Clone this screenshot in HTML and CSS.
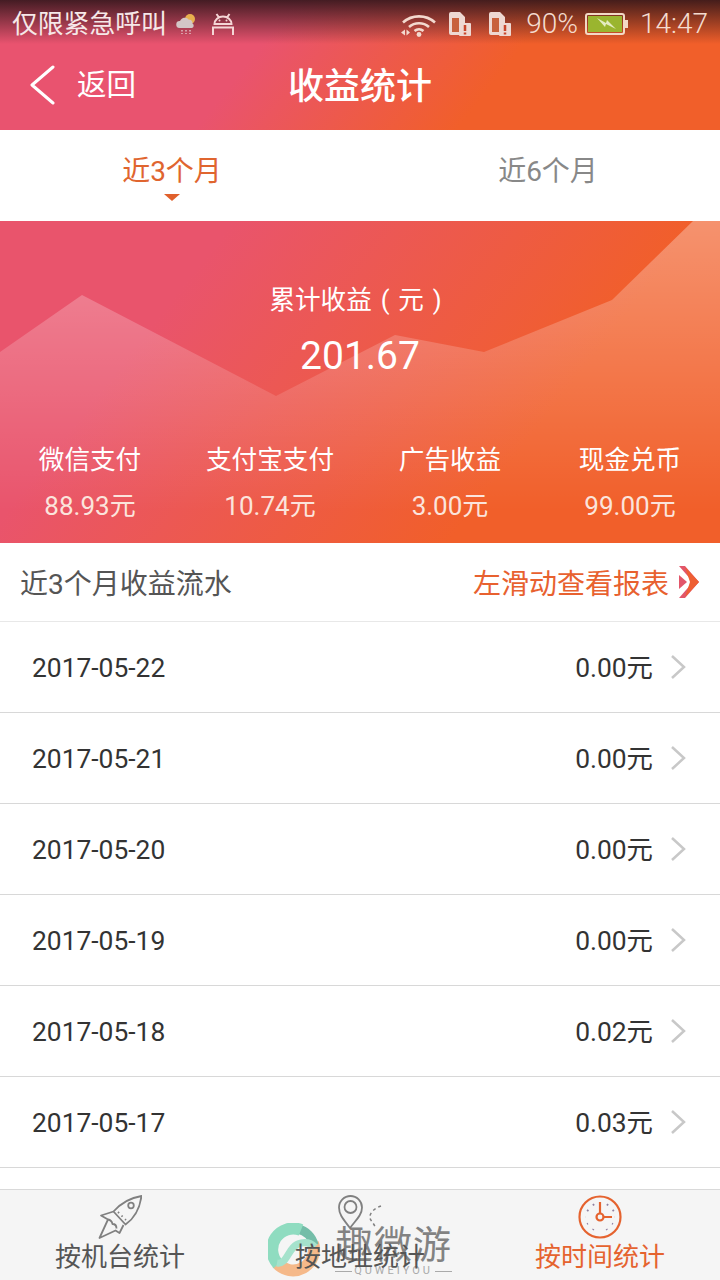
FILE: index.html
```html
<!DOCTYPE html>
<html lang="zh-CN">
<head>
    <meta charset="UTF-8">
    <meta name="viewport" content="width=device-width, initial-scale=1.0">
    <title>收益统计</title>
    <link rel="stylesheet" href="styles.css">
</head>
<body>
    <div class="page">
        <header class="app-head">
            <div class="status-bar">
                <div class="status-left">
                    <span class="carrier">仅限紧急呼叫</span>
                    <svg class="weather" width="20" height="24" viewBox="0 0 20 24">
                        <circle cx="14" cy="7" r="5" fill="#e8b04e"/>
                        <path d="M3.500 16a3.500 3.500 0 0 1 .5-7A5 5 0 0 1 12.500 7.500a4 4 0 0 1 4 4A2.500 2.500 0 0 1 16 16z" fill="#d3c6c6"/>
                        <path d="M6 18v4M10 18v4M14 18v4" stroke="#ecdcdc" stroke-width="1.200" stroke-dasharray="1.500 1.500"/>
                    </svg>
                    <svg class="android" width="24" height="23" viewBox="0 0 24 23" fill="none" stroke="#f5d6d6" stroke-width="2">
                        <path d="M3.500 11a8.500 7.500 0 0 1 17 0z"/>
                        <path d="M5.500 1l2.500 3.500M18.500 1L16 4.500"/>
                        <circle cx="8.500" cy="7.500" r="1" fill="#f5d6d6" stroke="none"/>
                        <circle cx="15.500" cy="7.500" r="1" fill="#f5d6d6" stroke="none"/>
                        <path d="M2 22v-7.500h20V22"/>
                    </svg>
                </div>
                <div class="status-right">
                    <svg class="wifi" width="36" height="26" viewBox="0 0 36 26" fill="none" stroke="#f3d9cf" stroke-width="2.600">
                        <path d="M3 11.500a24 24 0 0 1 32 0"/>
                        <path d="M9 16a15 15 0 0 1 20 0"/>
                        <path d="M14.500 20a7 7 0 0 1 9 0"/>
                        <circle cx="19" cy="23.500" r="2.400" fill="#f3d9cf" stroke="none"/>
                        <path d="M1 21.500l4-3v6zM6.500 18.500l3.500 3-3.500 3z" fill="#f3d9cf" stroke="none"/>
                    </svg>
                    <svg class="sim" width="23" height="26" viewBox="0 0 23 26">
                        <path d="M1 3a2 2 0 0 1 2-2h9l5 5v7h-6v11H3a2 2 0 0 1-2-2z" fill="#eed8d2"/>
                        <rect x="4" y="7" width="7" height="14" fill="#c8613c"/>
                        <rect x="11" y="12" width="12" height="13" rx="1" fill="#eed8d2"/>
                        <path d="M17 14v6M17 21.500v2" stroke="#c8452a" stroke-width="2.500"/>
                    </svg>
                    <svg class="sim" width="23" height="26" viewBox="0 0 23 26">
                        <path d="M1 3a2 2 0 0 1 2-2h9l5 5v7h-6v11H3a2 2 0 0 1-2-2z" fill="#eed8d2"/>
                        <rect x="4" y="7" width="7" height="14" fill="#c8613c"/>
                        <rect x="11" y="12" width="12" height="13" rx="1" fill="#eed8d2"/>
                        <path d="M17 14v6M17 21.500v2" stroke="#c8452a" stroke-width="2.500"/>
                    </svg>
                    <span class="status-text pct">90%</span>
                    <svg class="battery" width="44" height="22" viewBox="0 0 44 22">
                        <rect x="1" y="1" width="38" height="20" rx="2" fill="none" stroke="#f3d9c6" stroke-width="2"/>
                        <rect x="3" y="3" width="34" height="16" fill="#9ab52f"/>
                        <rect x="40" y="7" width="3" height="8" fill="#f3d9c6"/>
                        <path d="M12 5l9 5 1-3 9 9-10-5-1 3z" fill="#e4ecc0"/>
                    </svg>
                    <span class="status-text">14:47</span>
                </div>
            </div>
            <div class="nav-bar">
                <a class="back">
                    <svg width="26" height="40" viewBox="0 0 26 40" fill="none" stroke="#fff" stroke-width="3" stroke-linecap="round" stroke-linejoin="round">
                        <path d="M24 2L3 20l21 18"/>
                    </svg>
                    <span>返回</span>
                </a>
                <h1 class="title">收益统计</h1>
            </div>
        </header>

        <div class="tabs">
            <div class="tab tab-left active">近3个月</div>
            <div class="tab tab-right">近6个月</div>
        </div>

        <section class="hero">
            <svg class="hero-chart" width="720" height="322" viewBox="0 0 720 322">
                <defs>
                    <linearGradient id="chartFade" x1="0" y1="0" x2="0" y2="1">
                        <stop offset="0" stop-color="#fff" stop-opacity="0.32"/>
                        <stop offset="0.9" stop-color="#fff" stop-opacity="0"/>
                    </linearGradient>
                </defs>
                <polygon points="0,131 82,74 276,175 395,114 484,131 612,79 693,0 720,0 720,322 0,322" fill="url(#chartFade)"/>
            </svg>
            <div class="hero-total">
                <p class="hero-label">累计收益 ( 元 )</p>
                <p class="hero-value">201.67</p>
            </div>
            <div class="hero-stats">
                <div class="stat"><p>微信支付</p><p class="stat-value">88.93元</p></div>
                <div class="stat"><p>支付宝支付</p><p class="stat-value">10.74元</p></div>
                <div class="stat"><p>广告收益</p><p class="stat-value">3.00元</p></div>
                <div class="stat"><p>现金兑币</p><p class="stat-value">99.00元</p></div>
            </div>
        </section>

        <div class="list-head">
            <span class="list-title">近3个月收益流水</span>
            <span class="list-hint">
                <span class="hint-text">左滑动查看报表</span>
                <svg width="22" height="32" viewBox="0 0 22 32">
                    <polygon points="1,0 7,0 21,16 15,16" fill="#e2566a"/>
                    <polygon points="21,16 7,32 1,32 15,16" fill="#e2566a"/>
                    <polygon points="7,1 21,16 7,31 12,16" fill="#ee5f33"/>
                    <polygon points="1,9 9,16 1,23" fill="#e2566a"/>
                </svg>
            </span>
        </div>

        <ul class="rows">
            <li class="row"><span class="date">2017-05-22</span><span class="amount">0.00元</span><svg class="chev" width="16" height="24" viewBox="0 0 16 24"><path d="M2 1l12 11L2 23"/></svg></li>
            <li class="row"><span class="date">2017-05-21</span><span class="amount">0.00元</span><svg class="chev" width="16" height="24" viewBox="0 0 16 24"><path d="M2 1l12 11L2 23"/></svg></li>
            <li class="row"><span class="date">2017-05-20</span><span class="amount">0.00元</span><svg class="chev" width="16" height="24" viewBox="0 0 16 24"><path d="M2 1l12 11L2 23"/></svg></li>
            <li class="row"><span class="date">2017-05-19</span><span class="amount">0.00元</span><svg class="chev" width="16" height="24" viewBox="0 0 16 24"><path d="M2 1l12 11L2 23"/></svg></li>
            <li class="row"><span class="date">2017-05-18</span><span class="amount">0.02元</span><svg class="chev" width="16" height="24" viewBox="0 0 16 24"><path d="M2 1l12 11L2 23"/></svg></li>
            <li class="row"><span class="date">2017-05-17</span><span class="amount">0.03元</span><svg class="chev" width="16" height="24" viewBox="0 0 16 24"><path d="M2 1l12 11L2 23"/></svg></li>
        </ul>

        <nav class="bottom-nav">
            <div class="nav-item">
                <svg width="44" height="44" viewBox="0 0 44 44" fill="none" stroke="#808080" stroke-width="1.800" stroke-linejoin="round">
                    <path d="M43.500 1C34 2.500 24 7 15.500 16.500L27.500 29.500C37 23 42 12 43.500 1z"/>
                    <circle cx="33" cy="10.500" r="2.800"/>
                    <path d="M15.500 16.500L3 20.500l7 4-8.500 18.500 16-7.500 4 2.500 4-8M10 24.500c3 .5 4 2 4.500 4.500 2.500 0 4 1.500 4 4.500"/>
                    <path d="M20 17l8 8" stroke-dasharray="1.500 3.500"/>
                </svg>
                <span>按机台统计</span>
            </div>
            <div class="nav-item">
                <svg width="44" height="44" viewBox="0 0 44 44" fill="none" stroke="#808080" stroke-width="1.800">
                    <path d="M12 33C6 25 1 20 1 12.500a11.500 11.500 0 0 1 23 0C24 20 18 25 12 33z"/>
                    <circle cx="12.500" cy="12" r="6"/>
                    <path d="M43 11c-6 2-12 7-11 12 .5 3 4 5 6 11" stroke-dasharray="3 3" stroke-width="1.500"/>
                </svg>
                <span>按地址统计</span>
            </div>
            <div class="nav-item active">
                <svg width="44" height="44" viewBox="0 0 44 44" fill="none" stroke="#e5632f" stroke-width="2.200">
                    <circle cx="22" cy="22" r="20.500"/>
                    <path d="M22 7v11.500M25.500 22H34"/>
                    <circle cx="22" cy="22" r="3.500"/>
                    <path d="M30 9l-1 1.500M36 15l-1.500 1M37 22h-.1M35 29l-1-.5M29 35l-.5-1M22 37v-.1M15 35l.5-1M9 29l1-.5M7 22h.1M9 15l1.500 1M15 9l1 1.500" stroke="#8f7fa0" stroke-width="1.800"/>
                </svg>
                <span>按时间统计</span>
            </div>
            <div class="watermark">
                <svg class="wm-logo" width="52" height="54" viewBox="0 0 52 54" fill="none" stroke-width="12">
                    <path d="M45 20A21 21 0 0 1 9 40" stroke="#f5b98a"/>
                    <path d="M30 6A21 21 0 0 1 46 22" stroke="#74bda8" stroke-width="9"/>
                    <path d="M33 7A21 21 0 0 0 10 41" stroke="#8fdcc0"/>
                    <path d="M9 40C20 42 20 22 33 20C38 19 43 20 47 24" stroke="#a5e2cc" stroke-width="7"/>
                </svg>
                <div class="wm-text">
                    <span class="wm-name">趣微游</span>
                    <span class="wm-sub">QUWEIYOU</span>
                </div>
            </div>
        </nav>
    </div>
</body>
</html>
```

FILE: styles.css
```css
* {
    box-sizing: border-box;
}
body {
    margin: 0;
    padding: 0;
    font-family: Roboto, "Noto Sans CJK SC", sans-serif;
    background-color: #fff;
    color: #333;
}
p, ul, h1 {
    margin: 0;
    padding: 0;
}
.page {
    width: 720px;
    height: 1280px;
    display: flex;
    flex-direction: column;
    overflow: hidden;
}

/* top bar */
.app-head {
    height: 130px;
    background: linear-gradient(128deg, #e9536f 36%, #f15f2a 68%);
    color: #fff;
}
.status-bar {
    height: 44px;
    padding: 4px 12px 0;
    display: flex;
    justify-content: space-between;
    align-items: center;
    background: linear-gradient(to bottom, rgba(45, 20, 25, 0.88), rgba(45, 20, 25, 0));
}
.status-left, .status-right {
    display: flex;
    align-items: center;
}
.carrier {
    font-size: 25.800px;
    line-height: 36px;
    color: #f6e8e8;
}
.weather {
    margin-left: 9px;
}
.android {
    margin-left: 15px;
}
.status-text {
    font-size: 28px;
    font-weight: 300;
    line-height: 36px;
    color: #f4dccf;
}
.sim {
    margin-left: 12px;
}
.sim + .sim {
    margin-left: 17px;
}
.pct {
    margin-left: 15px;
}
.battery {
    margin: 0 11px 0 7px;
}
.nav-bar {
    height: 86px;
    position: relative;
    display: flex;
    align-items: center;
    justify-content: center;
}
.back {
    position: absolute;
    left: 29px;
    top: 21px;
    display: flex;
    align-items: center;
    gap: 22px;
    font-size: 29.500px;
    line-height: 40px;
}
.title {
    font-size: 36px;
    font-weight: 500;
    line-height: 50px;
}

/* tabs */
.tabs {
    height: 91px;
    display: flex;
    background: #fff;
}
.tab {
    flex: 1;
    height: 80px;
    padding-top: 21px;
    text-align: center;
    font-size: 28px;
    line-height: 42px;
    color: #888;
    position: relative;
}
.tab-left {
    padding-right: 18px;
}
.tab-right {
    padding-left: 14px;
}
.tab.active {
    color: #e0652f;
}
.tab.active::after {
    content: "";
    position: absolute;
    left: 164px;
    top: 64px;
    border-left: 8px solid transparent;
    border-right: 8px solid transparent;
    border-top: 7px solid #e0602c;
}

/* summary block */
.hero {
    height: 322px;
    position: relative;
    color: #fff;
    background: linear-gradient(128deg, #e9546c 24%, #f15f2a 72%);
}
.hero-chart {
    position: absolute;
    left: 0;
    top: 0;
}
.hero-total {
    position: relative;
    padding-top: 59px;
    text-align: center;
}
.hero-label {
    padding-right: 9px;
    font-size: 25.600px;
    line-height: 40px;
    word-spacing: 2.500px;
}
.hero-value {
    margin-top: 8px;
    font-size: 39px;
    line-height: 56px;
}
.hero-stats {
    position: relative;
    margin-top: 56px;
    display: grid;
    grid-template-columns: repeat(4, 1fr);
    text-align: center;
    font-size: 25.600px;
    line-height: 40px;
}
.stat-value {
    margin-top: 6px;
    font-size: 26px;
    color: #fbe4dc;
}

/* list */
.list-head {
    height: 79px;
    padding: 0 20px;
    display: flex;
    justify-content: space-between;
    align-items: center;
    border-bottom: 1px solid #e8e8e8;
    font-size: 28px;
    line-height: 40px;
}
.list-title {
    color: #555;
    padding-top: 6px;
}
.list-hint {
    color: #e8612f;
    display: flex;
    align-items: center;
    gap: 9px;
}
.hint-text {
    padding-top: 6px;
}
.rows {
    list-style: none;
    flex: 1;
}
.row {
    height: 91px;
    padding: 0 34px 0 32px;
    display: flex;
    align-items: center;
    border-bottom: 1px solid #d8d8d8;
    font-size: 26.400px;
    line-height: 36px;
    color: #333;
}
.date, .amount {
    padding-top: 2px;
}
.amount {
    margin-left: auto;
}
.chev {
    margin-left: 17px;
    fill: none;
    stroke: #c8c8c8;
    stroke-width: 2.500;
}

/* bottom nav */
.bottom-nav {
    height: 91px;
    position: relative;
    display: flex;
    background: #f5f5f5;
    border-top: 1px solid #d9d9d9;
}
.nav-item {
    flex: 1;
    padding-top: 6px;
    display: flex;
    flex-direction: column;
    align-items: center;
    font-size: 26px;
    line-height: 36px;
    color: #555;
}
.nav-item svg {
    margin-top: -1px;
}
.nav-item span {
    position: relative;
    z-index: 1;
}
.nav-item.active {
    color: #e5632f;
}
.watermark {
    position: absolute;
    left: 268px;
    top: 33px;
    display: flex;
    gap: 16px;
}
.wm-logo {
    margin-right: -1px;
}
.wm-text {
    display: flex;
    flex-direction: column;
    align-items: center;
}
.wm-name {
    font-size: 38px;
    line-height: 40px;
    margin-top: 2px;
    letter-spacing: 1px;
    color: #666;
    opacity: 0.8;
}
.wm-sub {
    display: flex;
    align-items: center;
    gap: 2px;
    font-size: 11px;
    line-height: 12px;
    letter-spacing: 3px;
    color: #aaa;
}
.wm-sub::before, .wm-sub::after {
    content: "";
    width: 17px;
    height: 1px;
    background: #aaa;
}
```
